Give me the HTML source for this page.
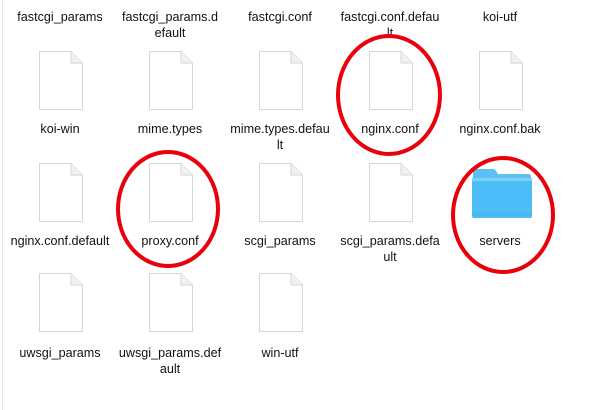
<!DOCTYPE html>
<html><head><meta charset="utf-8"><style>
body{margin:0;width:594px;height:410px;background:#fff;position:relative;overflow:hidden;font-family:"Liberation Sans",sans-serif;font-size:12.6px;color:#111}
.l{position:absolute;width:110px;text-align:center;line-height:16px;white-space:nowrap}
.d{position:absolute;width:46px;height:61px}
.edge{position:absolute;left:2px;top:0;width:1px;height:410px;background:#e4e4e4}
</style></head><body>
<div class="edge"></div>
<svg width="0" height="0" style="position:absolute"><defs>
<symbol id="doc" viewBox="0 0 46 61"><path d="M1.5 1.5H33L44.5 13V59.5H1.5Z" fill="#fff" stroke="#d6d6d6"/><path d="M33 1.5V13H44.5" fill="#f1f1f1" stroke="#d6d6d6"/></symbol>
</defs></svg>
<div class="l" style="left:5px;top:9px">fastcgi_params</div>
<div class="l" style="left:115px;top:9px">fastcgi_params.d<br>efault</div>
<div class="l" style="left:225px;top:9px">fastcgi.conf</div>
<div class="l" style="left:335px;top:9px">fastcgi.conf.defau<br>lt</div>
<div class="l" style="left:445px;top:9px">koi-utf</div>

<svg class="d" style="left:38px;top:50px"><use href="#doc"/></svg>
<svg class="d" style="left:148px;top:50px"><use href="#doc"/></svg>
<svg class="d" style="left:258px;top:50px"><use href="#doc"/></svg>
<svg class="d" style="left:368px;top:50px"><use href="#doc"/></svg>
<svg class="d" style="left:478px;top:50px"><use href="#doc"/></svg>
<div class="l" style="left:5px;top:121px">koi-win</div>
<div class="l" style="left:115px;top:121px">mime.types</div>
<div class="l" style="left:225px;top:121px">mime.types.defau<br>lt</div>
<div class="l" style="left:335px;top:121px">nginx.conf</div>
<div class="l" style="left:445px;top:121px">nginx.conf.bak</div>

<svg class="d" style="left:38px;top:162px"><use href="#doc"/></svg>
<svg class="d" style="left:148px;top:162px"><use href="#doc"/></svg>
<svg class="d" style="left:258px;top:162px"><use href="#doc"/></svg>
<svg class="d" style="left:368px;top:162px"><use href="#doc"/></svg>
<svg style="position:absolute;left:471px;top:168px" width="62" height="52" viewBox="0 0 62 52"><path d="M2 4Q2 1 5 1H22Q24 1 25 3L27 6H58Q60 6 60 9V14H2Z" fill="#5cc0f5"/><rect x="1" y="10" width="60" height="40" rx="2" fill="#4dbdf7"/><rect x="1" y="10" width="60" height="3" fill="#7dd0fa"/><path d="M1 45H61M1 47H61" stroke="#3aa8e6" stroke-width="0.6"/></svg>
<div class="l" style="left:5px;top:233px">nginx.conf.default</div>
<div class="l" style="left:115px;top:233px">proxy.conf</div>
<div class="l" style="left:225px;top:233px">scgi_params</div>
<div class="l" style="left:335px;top:233px">scgi_params.defa<br>ult</div>
<div class="l" style="left:445px;top:233px">servers</div>

<svg class="d" style="left:38px;top:272px"><use href="#doc"/></svg>
<svg class="d" style="left:148px;top:272px"><use href="#doc"/></svg>
<svg class="d" style="left:258px;top:272px"><use href="#doc"/></svg>
<div class="l" style="left:5px;top:345px">uwsgi_params</div>
<div class="l" style="left:115px;top:345px">uwsgi_params.def<br>ault</div>
<div class="l" style="left:225px;top:345px">win-utf</div>

<svg style="position:absolute;left:0;top:0" width="594" height="410">
<g fill="none" stroke="#e8000b" stroke-width="4">
<ellipse cx="389" cy="95" rx="51" ry="59"/>
<ellipse cx="168" cy="209" rx="50" ry="57"/>
<ellipse cx="503" cy="215" rx="50" ry="57"/>
</g></svg>
</body></html>
